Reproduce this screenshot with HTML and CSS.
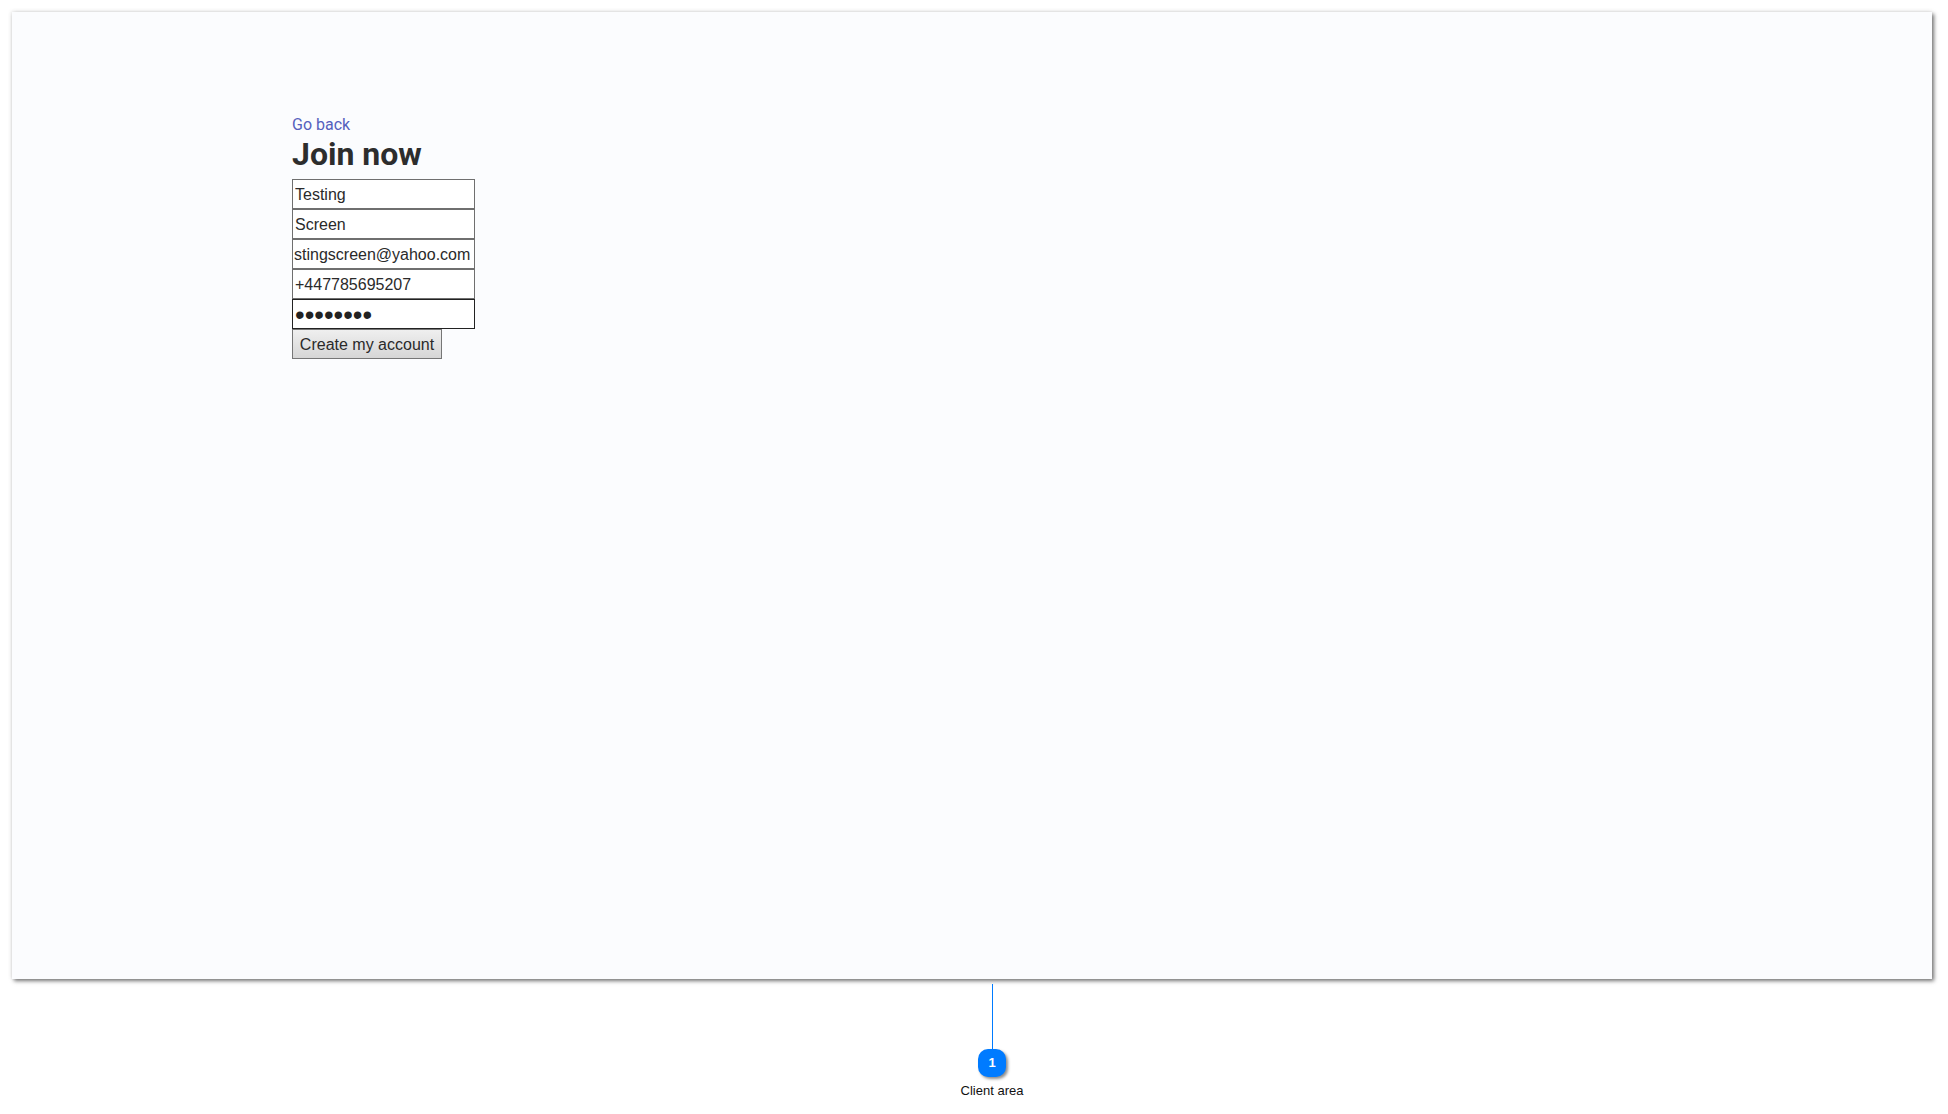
FILE: index.html
```html
<!DOCTYPE html>
<html lang="en">
<head>
<meta charset="utf-8">
<title>Join now</title>
<link rel="stylesheet" href="styles.css">
</head>
<body>
<main class="panel">
  <a class="back" href="#">Go back</a>
  <h1 class="title">Join now</h1>
  <form class="form">
    <input class="field" type="text" value="Testing">
    <input class="field" type="text" value="Screen">
    <input class="field field-tight" type="text" value="stingscreen@yahoo.com">
    <input class="field" type="text" value="+447785695207">
    <input class="field field-focus" type="password" value="password">
    <button class="submit" type="button">Create my account</button>
  </form>
</main>
<section class="callout">
  <div class="line"></div>
  <div class="badge">1</div>
  <div class="caption">Client area</div>
</section>
</body>
</html>
```
FILE: styles.css
```css
* { box-sizing: border-box; }
html, body { margin: 0; height: 100%; }
body { background: #fff; width: 1948px; height: 1114px; overflow: hidden; padding: 12px 16px 0 12px; font-family: "Liberation Sans", Arial, sans-serif; }
.panel {
  width: 1920px; height: 967px; background: #fbfcfe;
  padding: 102px 0 0 280px;
  box-shadow: 2px 2px 4px rgba(0,0,0,.55), -1px -1px 4px rgba(0,0,0,.08);
  display: flex; flex-direction: column; align-items: flex-start;
}
.back { font: 16px/22px Roboto, sans-serif; color: #5560bd; text-decoration: none; }
.title { margin: 0 0 7px; font: 700 32px/36px Roboto, sans-serif; color: #2d2d2d; }
.form { display: flex; flex-direction: column; align-items: flex-start; }
.field {
  width: 183px; height: 30px; border: 1px solid #6f6f6f; background: #fff;
  margin: 0; padding: 2px 2px 0; font: 16px "Liberation Sans", Arial, sans-serif; color: #2a2a2a; border-radius: 0; outline: 0;
}
.field-tight { padding: 2px 1px 0; }
.field-focus { border-color: #222; font-size: 27.5px; padding: 2px 2px 0; color: #222; }
.submit {
  height: 30px; width: 150px; padding: 2px 0 0; border: 1px solid #767676; border-radius: 0;
  background: linear-gradient(#efefef, #d6d6d6); color: #2a2a2a; font: 16px "Liberation Sans", Arial, sans-serif;
}
.callout { width: 120px; margin: 5px 0 0 920px; display: flex; flex-direction: column; align-items: center; }
.line { width: 1px; height: 65px; background: #007bff; }
.badge {
  width: 28px; height: 28px; border-radius: 10px; background: #007bff; color: #fff;
  font: 700 13px/28px "Liberation Sans", Arial, sans-serif; text-align: center;
  box-shadow: 2px 2px 3px rgba(0,0,0,.45);
}
.caption { margin-top: 6px; font: 13px/16px "Liberation Sans", Arial, sans-serif; color: #111; }
```
